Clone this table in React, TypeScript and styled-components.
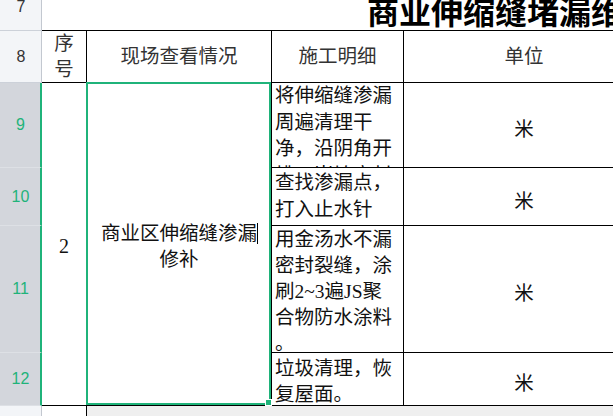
import React from "react";
import styled, { createGlobalStyle } from "styled-components";

const GREEN = "#1fb37a";
const HEADER_BG = "#f3f5f8";
const HEADER_SEL_BG = "#d3d6dc";

const Global = createGlobalStyle`
  html, body { margin: 0; padding: 0; background: #fff; overflow: hidden; }
  #root { width: 613px; height: 416px; }
`;

const Viewport = styled.div`
  width: 613px;
  height: 416px;
  overflow: hidden;
  background: #fff;
`;

const Sheet = styled.div`
  display: grid;
  grid-template-columns: 42px 45px 185px 132px 240px;
  grid-template-rows: 47px 52px 85px 58px 127px 53px 40px;
  margin-top: -16px;
  font-family: "Liberation Serif", "Noto Sans CJK SC", serif;
  color: #111;
`;

const RowHead = styled.div<{ $sel?: boolean; $last?: boolean }>`
  box-sizing: border-box;
  display: flex;
  align-items: center;
  justify-content: center;
  font-family: "Liberation Sans", Arial, sans-serif;
  font-size: 16px;
  padding-left: 1px;
  background: ${(p) => (p.$sel ? HEADER_SEL_BG : HEADER_BG)};
  color: ${(p) => (p.$sel ? GREEN : "#333")};
  border-right: ${(p) => (p.$sel ? `2px solid ${GREEN}` : "1px solid #c3c8d0")};
  border-bottom: ${(p) => (p.$last ? "none" : `1px solid ${p.$sel ? "#dde0e5" : "#ccd1d9"}`)};
`;

const Cell = styled.div`
  box-sizing: border-box;
  border-right: 1px solid #000;
  border-bottom: 1px solid #000;
  font-size: 19.5px;
  overflow: hidden;
`;

const TitleCell = styled(Cell)`
  grid-column: 2 / -1;
  border-right: none;
  display: flex;
  align-items: center;
  padding: 6px 0 0 325px;
  overflow: hidden;
`;

const Title = styled.span`
  font-family: "Noto Sans CJK SC", sans-serif;
  font-weight: 700;
  font-size: 32px;
  line-height: 1;
  white-space: nowrap;
  color: #000;
`;

const HeadCell = styled(Cell)<{ $noRight?: boolean }>`
  display: flex;
  align-items: center;
  justify-content: center;
  text-align: center;
  line-height: 26px;
  color: #333;
  ${(p) => (p.$noRight ? "border-right: none;" : "")}
`;

const SeqCell = styled(Cell)`
  grid-row: span 4;
  display: flex;
  align-items: center;
  justify-content: center;
  font-size: 20px;
  padding-top: 5px;
`;

const SiteCell = styled(Cell)`
  grid-row: span 4;
  position: relative;
  overflow: visible;
  display: flex;
  align-items: center;
  justify-content: center;
  text-align: center;
  line-height: 26px;
  padding-top: 5px;
`;

const Selection = styled.div`
  position: absolute;
  top: -1px;
  left: -1px;
  right: 0;
  bottom: 0;
  border: 2px solid ${GREEN};
  pointer-events: none;
`;

const FillHandle = styled.div`
  position: absolute;
  right: -3px;
  bottom: -3px;
  width: 5px;
  height: 5px;
  background: ${GREEN};
  border: 1px solid #fff;
`;

const Caret = styled.span`
  display: inline-block;
  width: 0;
  height: 21px;
  border-left: 1px solid #000;
  margin-right: -1px;
  vertical-align: -4px;
`;

const DetailCell = styled(Cell)<{ $pad: number; $lh: number }>`
  padding: ${(p) => p.$pad}px 0 0 3px;
  line-height: ${(p) => p.$lh}px;
`;

const Line = styled.div`
  white-space: nowrap;
`;

const UnitCell = styled(Cell)`
  border-right: none;
  display: flex;
  align-items: center;
  justify-content: center;
  padding-top: 5px;
`;

const BlankCell = styled.div`
  border-right: 1px solid #000;
  background: #fff;
`;

const Filler = styled.div`
  grid-column: 3 / -1;
  background: #efefef;
`;

const details = [
  { lines: ["将伸缩缝渗漏", "周遍清理干", "净，沿阴角开", "槽，嵌填密封"], pad: 0, lh: 26.5 },
  { lines: ["查找渗漏点，", "打入止水针"], pad: 2, lh: 26.5 },
  { lines: ["用金汤水不漏", "密封裂缝，涂", "刷2~3遍JS聚", "合物防水涂料", "。"], pad: 1, lh: 26 },
  { lines: ["垃圾清理，恢", "复屋面。"], pad: 3, lh: 26 },
];

export default function App() {
  return (
    <Viewport>
      <Global />
      <Sheet>
        <RowHead>7</RowHead>
        <TitleCell>
          <Title>商业伸缩缝堵漏维修工程</Title>
        </TitleCell>

        <RowHead>8</RowHead>
        <HeadCell>
          序<br />号
        </HeadCell>
        <HeadCell>现场查看情况</HeadCell>
        <HeadCell>施工明细</HeadCell>
        <HeadCell $noRight>单位</HeadCell>

        {details.map((d, i) => (
          <React.Fragment key={i}>
            <RowHead $sel>{9 + i}</RowHead>
            {i === 0 && (
              <>
                <SeqCell>2</SeqCell>
                <SiteCell>
                  <div>
                    商业区伸缩缝渗漏
                    <Caret />
                    <br />
                    修补
                  </div>
                  <Selection>
                    <FillHandle />
                  </Selection>
                </SiteCell>
              </>
            )}
            <DetailCell $pad={d.pad} $lh={d.lh}>
              {d.lines.map((l, j) => (
                <Line key={j}>{l}</Line>
              ))}
            </DetailCell>
            <UnitCell>米</UnitCell>
          </React.Fragment>
        ))}

        <RowHead $last />
        <BlankCell />
        <Filler />
      </Sheet>
    </Viewport>
  );
}
